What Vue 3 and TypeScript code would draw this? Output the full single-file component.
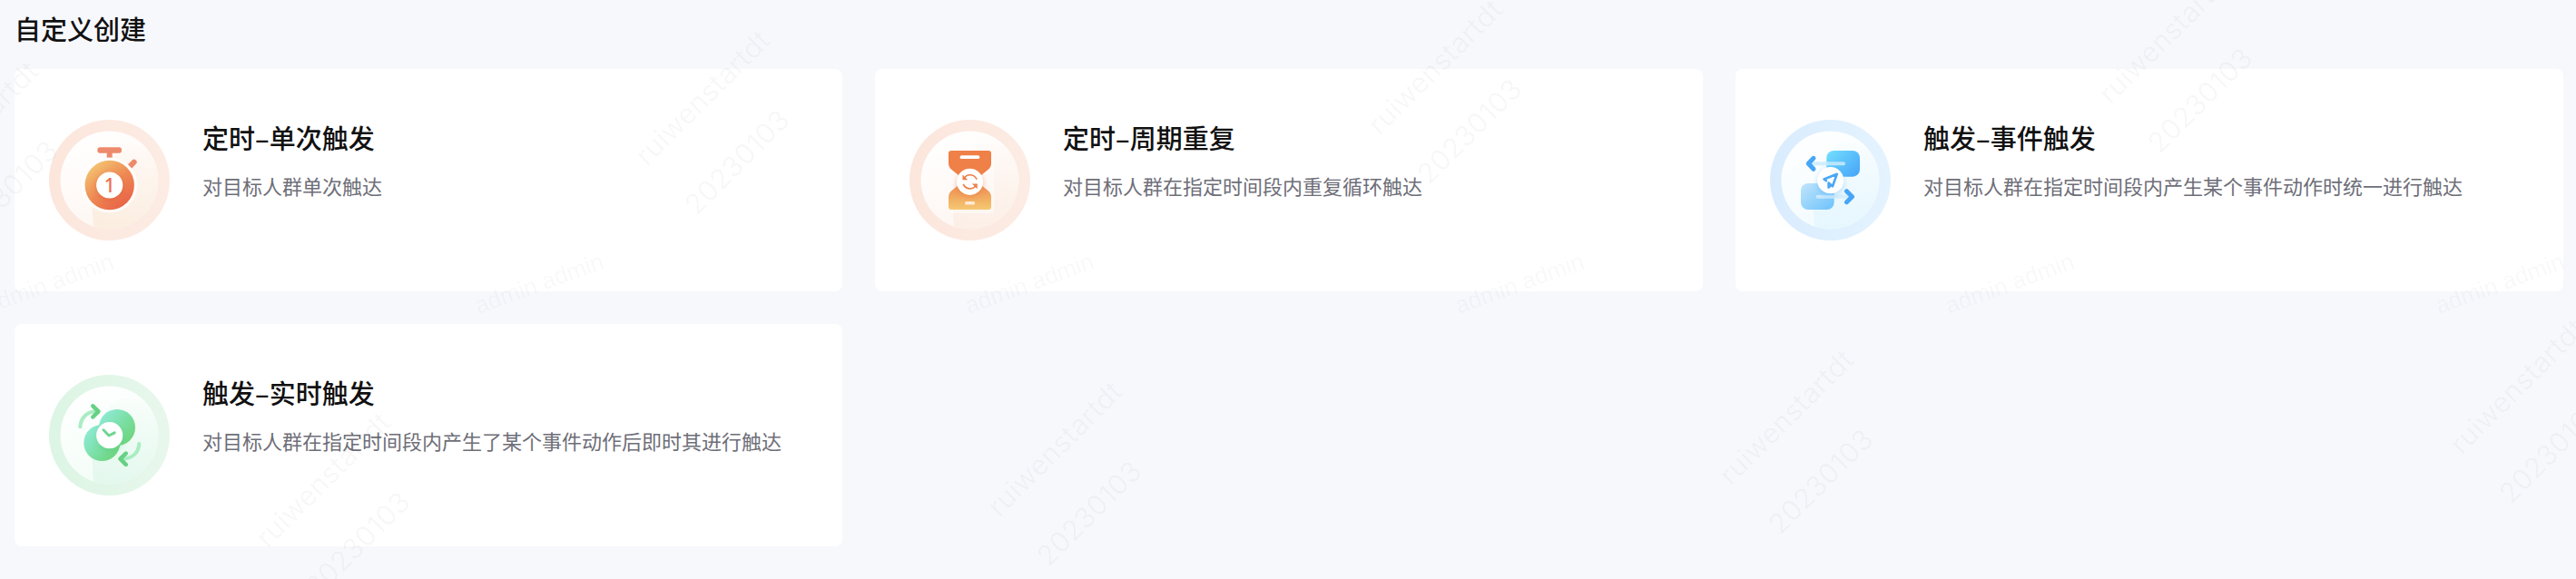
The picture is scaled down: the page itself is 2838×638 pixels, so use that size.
<script setup lang="ts">
type IconName = 'once' | 'cycle' | 'event' | 'realtime'

interface TriggerCard {
  icon: IconName
  title: string
  desc: string
}

interface Point {
  x: number
  y: number
}

const cards: TriggerCard[] = [
  { icon: 'once', title: '定时–单次触发', desc: '对目标人群单次触达' },
  { icon: 'cycle', title: '定时–周期重复', desc: '对目标人群在指定时间段内重复循环触达' },
  { icon: 'event', title: '触发–事件触发', desc: '对目标人群在指定时间段内产生某个事件动作时统一进行触达' },
  { icon: 'realtime', title: '触发–实时触发', desc: '对目标人群在指定时间段内产生了某个事件动作后即时其进行触达' },
]

const palette: Record<IconName, { ring: string; ringEnd: string; face: string; shade: string }> = {
  once: { ring: '#fce6dc', ringEnd: '#fcece4', face: '#fef6f2', shade: '#fbeee0' },
  cycle: { ring: '#fce6dc', ringEnd: '#fcece4', face: '#fef6f2', shade: '#fcefe6' },
  event: { ring: '#d9ecfe', ringEnd: '#e4f3fe', face: '#f2fbff', shade: '#e6f7fe' },
  realtime: { ring: '#dcf5e4', ringEnd: '#e8f7ec', face: '#f3fdf7', shade: '#e4f8ee' },
}

const userMarks: Point[] = [
  { x: -93, y: 218 },
  { x: 713, y: 184 },
  { x: 1520, y: 150 },
  { x: 2325, y: 116 },
  { x: 295, y: 605 },
  { x: 1101, y: 571 },
  { x: 1907, y: 536 },
  { x: 2712, y: 502 },
]

const adminMarks: Point[] = Array.from({ length: 6 }, (_, i) => ({ x: i * 540 - 13, y: 346 }))
</script>

<template>
  <main class="page">
    <h2 class="heading">自定义创建</h2>
    <div class="grid">
      <button v-for="card in cards" :key="card.icon" type="button" class="card">
        <svg class="icon" viewBox="0 0 133 133" aria-hidden="true">
          <defs>
            <linearGradient :id="`ring-${card.icon}`" x1="0" y1="0" x2="1" y2="0">
              <stop offset="0" :stop-color="palette[card.icon].ring" />
              <stop offset="1" :stop-color="palette[card.icon].ringEnd" />
            </linearGradient>
            <linearGradient :id="`face-${card.icon}`" x1="0.2" y1="0" x2="0.6" y2="1">
              <stop offset="0" stop-color="#ffffff" />
              <stop offset="1" :stop-color="palette[card.icon].face" />
            </linearGradient>
            <linearGradient :id="`shade-${card.icon}`" x1="0.5" y1="0" x2="0.3" y2="1">
              <stop offset="0" :stop-color="palette[card.icon].shade" stop-opacity="0.1" />
              <stop offset="1" :stop-color="palette[card.icon].shade" />
            </linearGradient>
            <clipPath :id="`clip-${card.icon}`"><circle cx="66.5" cy="66.5" r="54" /></clipPath>
            <filter :id="`soft-${card.icon}`" x="-50%" y="-50%" width="200%" height="200%">
              <feGaussianBlur stdDeviation="3" />
            </filter>
          </defs>
          <circle cx="66.5" cy="66.5" r="66.5" :fill="`url(#ring-${card.icon})`" />
          <circle cx="66.5" cy="66.5" r="54" :fill="`url(#face-${card.icon})`" />
          <path
            d="M78 27C56 39 42 72 50 122H122V50C112 28 92 22 78 27Z"
            :fill="`url(#shade-${card.icon})`"
            :clip-path="`url(#clip-${card.icon})`"
          />

          <g v-if="card.icon === 'once'">
            <defs>
              <linearGradient id="watch" x1="0.1" y1="0.1" x2="0.75" y2="0.95">
                <stop offset="0" stop-color="#f4c672" />
                <stop offset="0.55" stop-color="#ee8853" />
                <stop offset="1" stop-color="#e96548" />
              </linearGradient>
            </defs>
            <circle cx="66.7" cy="72" r="30.5" fill="#ffffff" opacity="0.75" />
            <rect x="53.3" y="30.2" width="26.7" height="6.5" rx="3" fill="#ee8a6c" />
            <rect x="63.7" y="35" width="6" height="6.6" fill="#ee8a6c" />
            <path d="M-3 5V-1.5A3 3 0 0 1 3 -1.5V5Z" transform="translate(92.6 47.8) rotate(45)" fill="#ee8a6c" />
            <circle cx="66.7" cy="72" r="27.2" fill="url(#watch)" />
            <circle cx="66.7" cy="74" r="14.5" fill="#d9573a" opacity="0.5" filter="url(#soft-once)" />
            <circle cx="66.7" cy="72" r="14.6" fill="#ffffff" />
            <text x="66.7" y="80" class="digit">1</text>
          </g>

          <g v-else-if="card.icon === 'cycle'">
            <defs>
              <linearGradient id="sand" x1="0" y1="0" x2="0" y2="1">
                <stop offset="0" stop-color="#ec8450" />
                <stop offset="0.55" stop-color="#f1aa60" />
                <stop offset="1" stop-color="#f5c873" />
              </linearGradient>
            </defs>
            <path d="M46 37H93V103H46Z" fill="#ffffff" opacity="0.45" />
            <path d="M46 34H87Q90 34 90 37V48Q90 52 86.5 55L74 65H59L46.5 55Q43 52 43 48V37Q43 34 46 34Z" fill="#ef8047" />
            <path d="M46 99H87Q90 99 90 96V85Q90 81 86.5 78L74 68H59L46.5 78Q43 81 43 85V96Q43 99 46 99Z" fill="url(#sand)" />
            <rect x="55.6" y="39.3" width="21.7" height="3.8" rx="1.9" fill="#ffffff" />
            <rect x="61" y="90" width="11" height="3.6" rx="1.6" fill="#fdebd6" />
            <circle cx="66.5" cy="70.5" r="14.5" fill="#ec7840" opacity="0.5" filter="url(#soft-cycle)" />
            <circle cx="66.5" cy="68.3" r="14.6" fill="#ffffff" />
            <g fill="none" stroke="#ec7f4a" stroke-width="1.7">
              <path d="M59.7 65.4C62.5 59.5 70.5 58.8 74.2 65.6" />
              <path d="M74 71.2C71 77.3 62.8 77.6 59.2 71" />
            </g>
            <path d="M58.5 60.5V66.3H64.3Z" fill="#ec7f4a" />
            <path d="M74.7 76.2V70.4H68.9Z" fill="#ec7f4a" />
          </g>

          <g v-else-if="card.icon === 'event'">
            <defs>
              <linearGradient id="front" x1="0" y1="0.1" x2="1" y2="0.9">
                <stop offset="0" stop-color="#72dcfe" />
                <stop offset="1" stop-color="#48a6f8" />
              </linearGradient>
              <linearGradient id="back" x1="0" y1="0" x2="1" y2="1">
                <stop offset="0" stop-color="#c2e5fb" />
                <stop offset="1" stop-color="#6cc2fc" />
              </linearGradient>
            </defs>
            <rect x="62.3" y="34" width="36.7" height="28.7" rx="8" fill="url(#front)" />
            <rect x="34" y="70" width="36.7" height="29" rx="8" fill="url(#back)" />
            <g fill="none" stroke-linecap="round">
              <path d="M46 48.3H81" stroke="#c9ebfe" stroke-width="4" opacity="0.85" />
              <path d="M52.5 84.7H86" stroke="#d2edfe" stroke-width="4" opacity="0.85" />
              <g stroke="#48a6f6" stroke-width="5" stroke-linejoin="round">
                <path d="M48 42.3L42.3 48.3L48 54.3" />
                <path d="M84.5 78.7L90.5 84.7L84.5 90.7" />
              </g>
            </g>
            <circle cx="66.7" cy="69.5" r="14" fill="#55aef2" opacity="0.4" filter="url(#soft-event)" />
            <circle cx="66.7" cy="66.7" r="14.6" fill="#ffffff" />
            <path
              d="M62 67.2L59.5 65.5L73.8 59.8L69 73.2L64.6 69.6V74.6L67 72.4"
              fill="none"
              stroke="#4aa7f6"
              stroke-width="2.6"
              stroke-linecap="round"
              stroke-linejoin="round"
            />
          </g>

          <g v-else>
            <defs>
              <linearGradient id="leaf" x1="0.05" y1="0.2" x2="0.85" y2="0.85">
                <stop offset="0" stop-color="#8eead5" />
                <stop offset="1" stop-color="#6dd680" />
              </linearGradient>
            </defs>
            <circle cx="75" cy="58" r="20" fill="url(#leaf)" />
            <circle cx="58.3" cy="75" r="20" fill="url(#leaf)" />
            <circle cx="67.5" cy="69.5" r="13.5" fill="#45bd72" opacity="0.4" filter="url(#soft-realtime)" />
            <circle cx="66.7" cy="66.7" r="14.6" fill="#ffffff" />
            <g fill="none" stroke-linecap="round" stroke-linejoin="round">
              <path d="M60 60.8L66 67L72.2 63.8" stroke="#6fd592" stroke-width="3" />
              <g stroke="#a9edc2" stroke-width="4">
                <path d="M34.3 57.3C35 47.5 41.5 40.6 52 40.3" />
                <path d="M99.3 76C98.6 85.8 92 92.2 81 92.7" />
              </g>
              <g stroke="#66d184" stroke-width="4.5">
                <path d="M48.3 34.3L54.5 40.3L48.3 46.5" />
                <path d="M84.7 86.6L78.5 92.7L84.7 98.9" />
              </g>
            </g>
          </g>
        </svg>
        <span class="body">
          <span class="title">{{ card.title }}</span>
          <span class="desc">{{ card.desc }}</span>
        </span>
      </button>
    </div>

    <svg class="watermark" aria-hidden="true">
      <g v-for="(p, i) in userMarks" :key="`u${i}`" :transform="`translate(${p.x} ${p.y}) rotate(-45)`">
        <text class="mark-user">ruiwenstartdt</text>
        <text class="mark-user" y="77">20230103</text>
      </g>
      <g v-for="(p, i) in adminMarks" :key="`a${i}`" :transform="`translate(${p.x} ${p.y}) rotate(-20)`">
        <text class="mark-admin">admin admin</text>
      </g>
    </svg>
  </main>
</template>

<style>
body {
  margin: 0;
  background: #f7f8fc;
}
</style>

<style scoped>
.page {
  position: relative;
  box-sizing: border-box;
  min-height: 100vh;
  padding: 10px 14px 36px 16px;
  overflow: hidden;
  background: #f7f8fc;
  color: #111111;
  font-family: 'Noto Sans CJK SC', 'Noto Sans', sans-serif;
}

.heading {
  margin: 0 0 24px;
  font-size: 29px;
  font-weight: 500;
  line-height: 42px;
}

.grid {
  display: grid;
  grid-template-columns: repeat(3, minmax(0, 1fr));
  gap: 36px;
}

.card {
  display: flex;
  align-items: flex-start;
  gap: 36px;
  padding: 56px 38px;
  border: 0;
  border-radius: 8px;
  background: #ffffff;
  color: inherit;
  font: inherit;
  text-align: left;
  cursor: pointer;
}

.icon {
  flex: none;
  width: 133px;
  height: 133px;
}

.body {
  display: flex;
  flex-direction: column;
  gap: 18px;
  min-width: 0;
}

.title {
  font-size: 29px;
  font-weight: 500;
  line-height: 38px;
}

.desc {
  color: #6e6e78;
  font-size: 22px;
  font-weight: 400;
  line-height: 32px;
}

.digit {
  fill: #ee6f4b;
  font-family: 'Noto Sans', sans-serif;
  font-size: 21px;
  font-weight: 500;
  text-anchor: middle;
}

.watermark {
  position: absolute;
  inset: 0;
  width: 100%;
  height: 100%;
  pointer-events: none;
}

.mark-user {
  fill: rgba(0, 0, 0, 0.035);
  font-family: Inter, 'Noto Sans', sans-serif;
  font-size: 31px;
  font-weight: 400;
}

.mark-admin {
  fill: rgba(40, 40, 80, 0.04);
  font-family: 'Liberation Sans', Arial, sans-serif;
  font-size: 26px;
}
</style>
